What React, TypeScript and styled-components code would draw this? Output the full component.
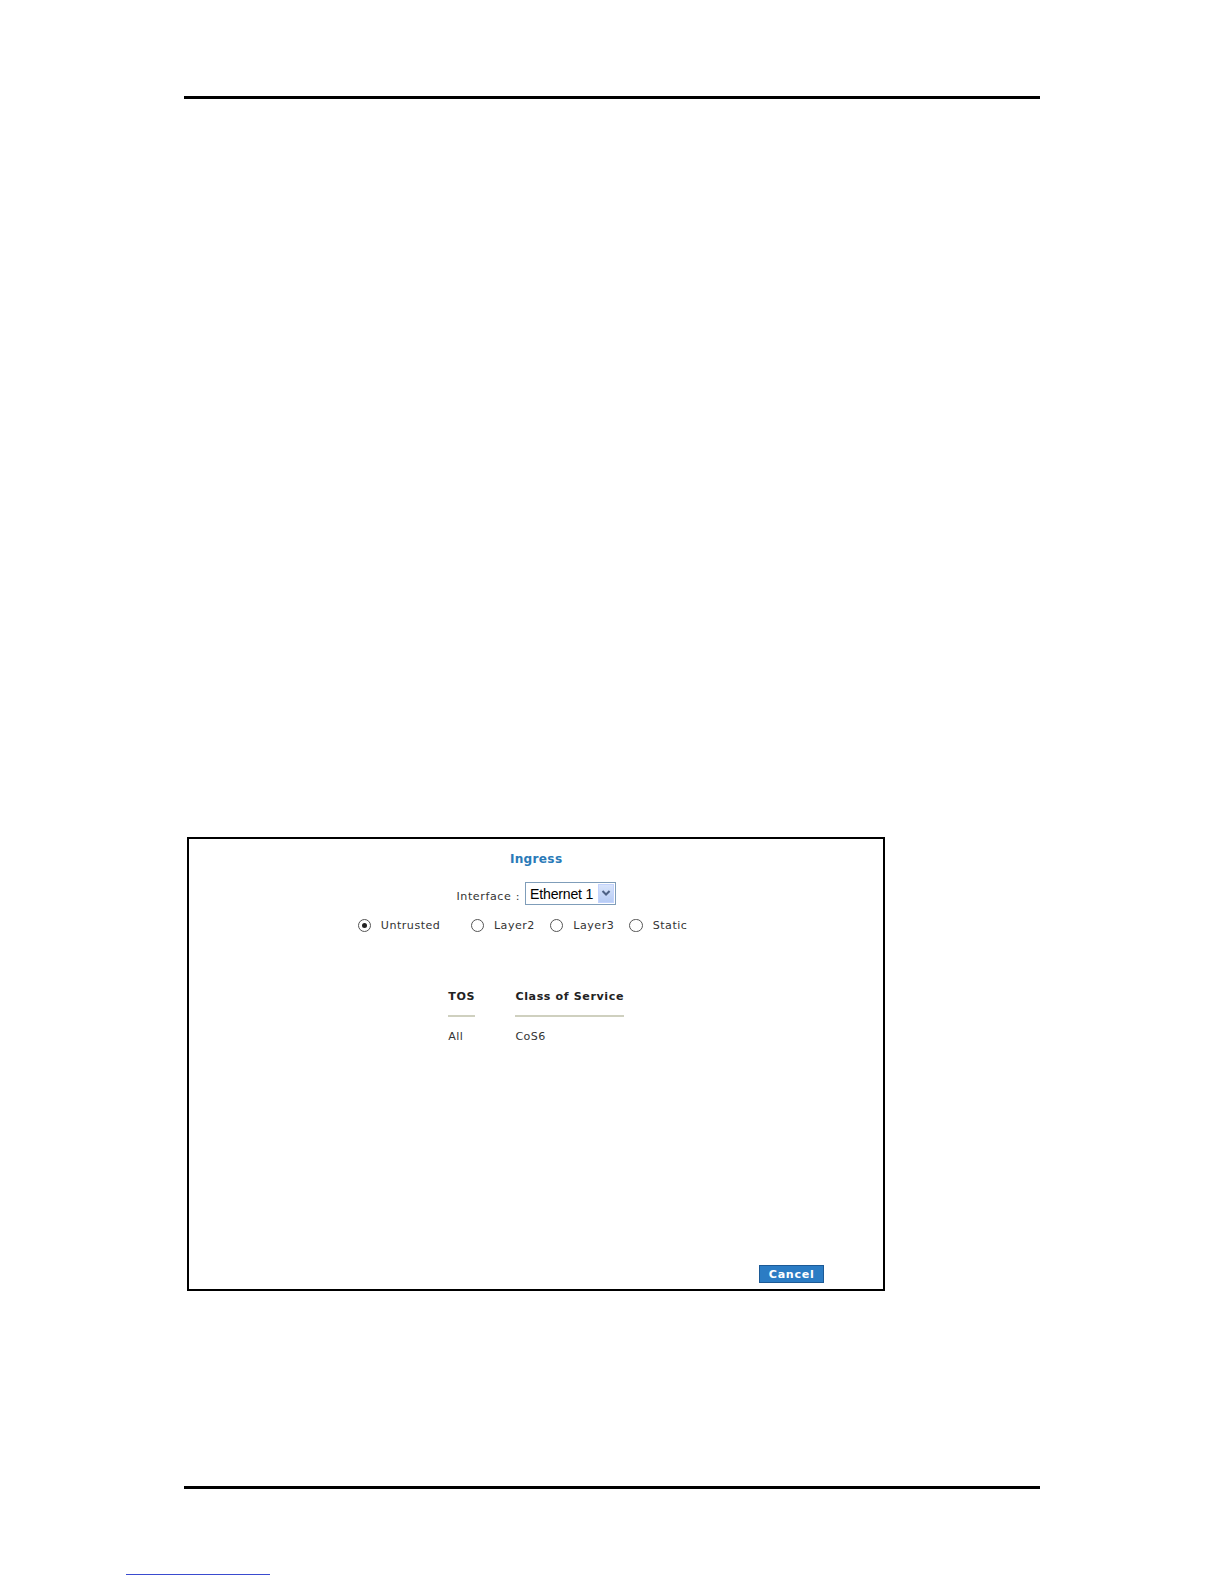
import styled, { createGlobalStyle } from 'styled-components';

const GlobalStyle = createGlobalStyle`
  html, body {
    margin: 0;
    overflow: hidden;
  }
  body {
    background: #fff;
    font-family: "DejaVu Sans", Verdana, sans-serif;
  }
`;

const modes = ['Untrusted', 'Layer2', 'Layer3', 'Static'];

const App = () => (
  <>
    <GlobalStyle />
    <Page>
      <Rule />
      <Frame>
        <Title>Ingress</Title>
        <InterfaceRow>
          <Label>Interface :</Label>
          <Select>
            <SelectText>Ethernet 1</SelectText>
            <SelectButton>
              <svg width="10" height="8" viewBox="0 0 10 8">
                <path d="M1.5 2 L5 5.5 L8.5 2" fill="none" stroke="#4d6185" strokeWidth="2" />
              </svg>
            </SelectButton>
          </Select>
        </InterfaceRow>
        <RadioRow>
          {modes.map((m, i) => (
            <RadioItem key={m} wide={i === 0}>
              <Radio checked={i === 0} />
              <RadioLabel>{m}</RadioLabel>
            </RadioItem>
          ))}
        </RadioRow>
        <Table>
          <Column>
            <HeadCell>TOS</HeadCell>
            <Cell>All</Cell>
          </Column>
          <Column>
            <HeadCell>Class of Service</HeadCell>
            <Cell>CoS6</Cell>
          </Column>
        </Table>
        <Footer>
          <CancelButton>Cancel</CancelButton>
        </Footer>
      </Frame>
      <BottomRule />
      <FootLink />
    </Page>
  </>
);

export default App;

const Page = styled.div`
  width: 1212px;
  height: 1568px;
  zoom: 1.0097;
  overflow: hidden;
  padding-top: 95px;
  box-sizing: border-box;
  display: flex;
  flex-direction: column;
`;

const Rule = styled.div`
  margin-left: 182px;
  width: 848px;
  height: 3px;
  background: #000;
`;

const BottomRule = styled(Rule)`
  margin-top: 193px;
`;

const FootLink = styled.div`
  margin-left: 125px;
  margin-top: 84px;
  width: 142px;
  height: 1px;
  background: #3a4bd0;
`;

const Frame = styled.div`
  margin-top: 731px;
  margin-left: 185px;
  width: 692px;
  height: 450px;
  box-sizing: border-box;
  border: 2px solid #000;
  display: flex;
  flex-direction: column;
  align-items: center;
  padding-top: 13px;
  color: #333;
  font-size: 11px;
`;

const Title = styled.div`
  color: #2a7ab8;
  font-weight: bold;
  font-size: 12px;
  line-height: 14px;
  letter-spacing: 0.3px;
`;

const InterfaceRow = styled.div`
  display: flex;
  align-items: center;
  gap: 5px;
  margin-top: 16px;
`;

const Label = styled.span`
  padding-top: 5px;
  letter-spacing: 0.6px;
`;

const Select = styled.div`
  display: flex;
  align-items: center;
  width: 90px;
  height: 22px;
  box-sizing: border-box;
  border: 1px solid #7f9db9;
  background: #fff;
  padding: 1px;
`;

const SelectText = styled.span`
  flex: 1;
  font-family: "Liberation Sans", Arial, sans-serif;
  font-size: 14px;
  color: #000;
  padding-left: 3px;
  letter-spacing: -0.2px;
`;

const SelectButton = styled.span`
  width: 16px;
  height: 18px;
  display: flex;
  align-items: center;
  justify-content: center;
  background: linear-gradient(#d8e4fb, #b7ccf5);
  border: 1px solid #c3d3fd;
  box-sizing: border-box;
`;

const RadioRow = styled.div`
  display: flex;
  align-items: center;
  margin-top: 14px;
  padding-right: 27px;
`;

const RadioItem = styled.div<{ wide?: boolean }>`
  display: flex;
  align-items: center;
  gap: 10px;
  margin-right: ${(p) => (p.wide ? '30px' : '15px')};
  &:last-child {
    margin-right: 0;
  }
`;

const Radio = styled.span<{ checked?: boolean }>`
  width: 13px;
  height: 13px;
  box-sizing: border-box;
  border: 1px solid #555;
  border-radius: 50%;
  background: #fff;
  display: flex;
  align-items: center;
  justify-content: center;
  &::after {
    content: '';
    width: 5px;
    height: 5px;
    border-radius: 50%;
    background: ${(p) => (p.checked ? '#222' : 'transparent')};
  }
`;

const RadioLabel = styled.span`
  letter-spacing: 0.5px;
`;

const Table = styled.div`
  display: flex;
  gap: 40px;
  margin-top: 58px;
`;

const Column = styled.div`
  display: flex;
  flex-direction: column;
`;

const HeadCell = styled.div`
  font-weight: bold;
  color: #222;
  padding-bottom: 11px;
  border-bottom: 2px solid #cfd0bf;
  letter-spacing: 0.6px;
`;

const Cell = styled.div`
  padding-top: 13px;
  letter-spacing: 0.4px;
`;

const Footer = styled.div`
  margin-top: auto;
  align-self: stretch;
  display: flex;
  justify-content: flex-end;
  padding: 0 59px 6px 0;
`;

const CancelButton = styled.button`
  width: 64px;
  height: 18px;
  padding: 0;
  border: 1px solid #1c5a96;
  background: #2b7cc4;
  color: #fff;
  font-family: "DejaVu Sans", Verdana, sans-serif;
  font-weight: bold;
  font-size: 11px;
  letter-spacing: 0.7px;
`;
